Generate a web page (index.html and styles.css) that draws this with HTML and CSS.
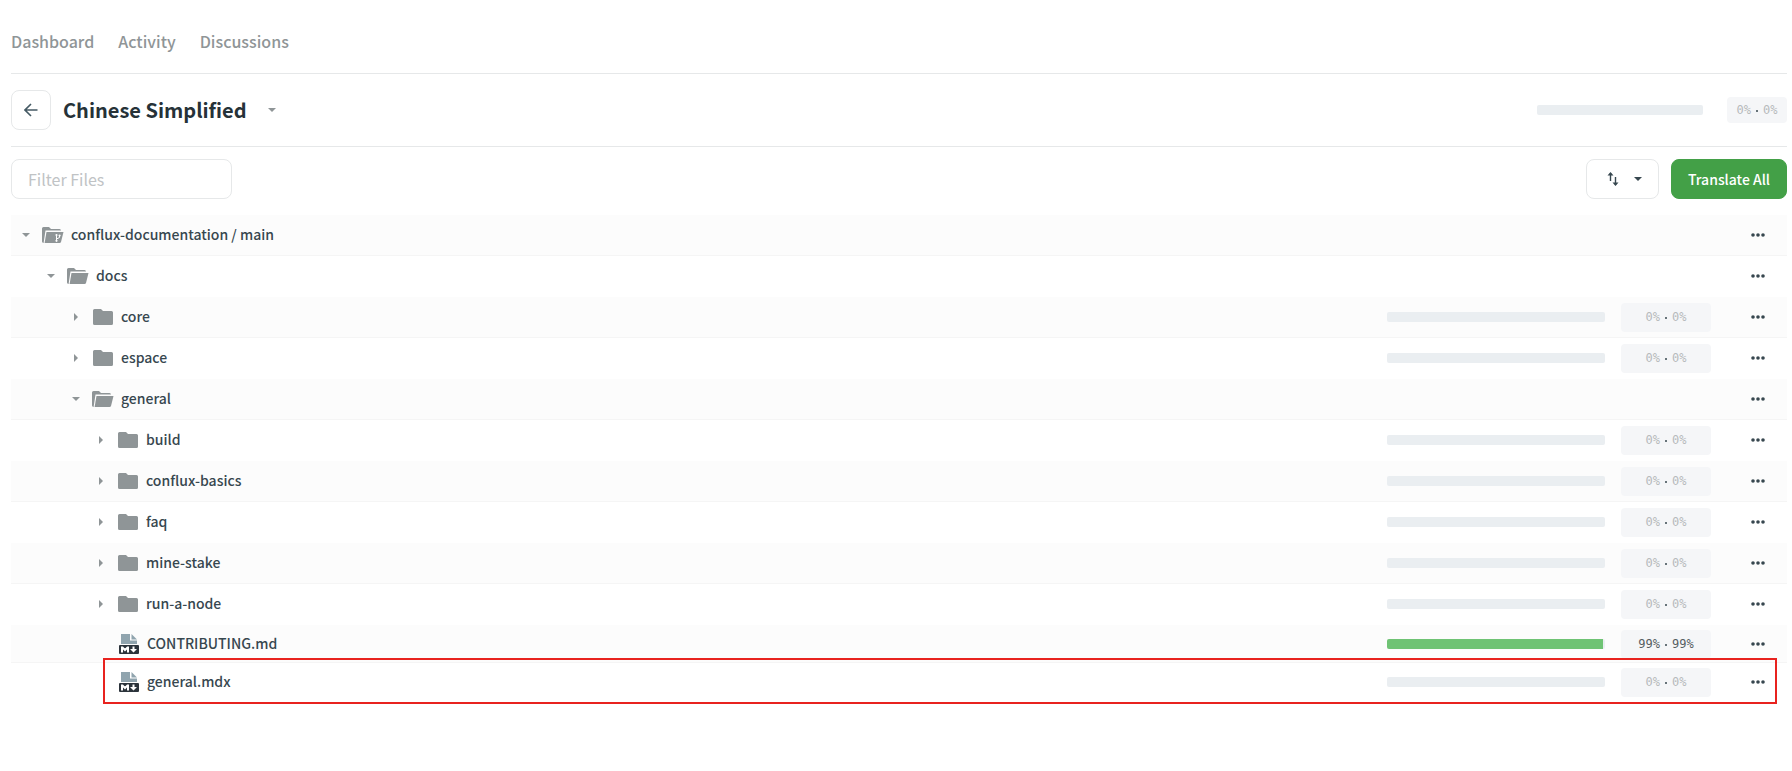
FILE: index.html
```
<!DOCTYPE html>
<html lang="en">
<head>
    <meta charset="UTF-8">
    <meta name="viewport" content="width=device-width, initial-scale=1.0">
    <title>Chinese Simplified</title>
    <link rel="stylesheet" href="styles.css">
</head>
<body>
    <!-- shared icons -->
    <svg class="sprite" aria-hidden="true">
        <symbol id="folder" viewBox="0 0 20 16"><path d="M1.500 0H8l2 2h8.500A1.500 1.500 0 0 1 20 3.500V14.500a1.500 1.500 0 0 1-1.500 1.500h-17A1.500 1.500 0 0 1 0 14.500v-13A1.500 1.500 0 0 1 1.500 0z"/></symbol>
        <symbol id="folder-open" viewBox="0 0 22 16"><path d="M1.500 0H7l2 2h8.500A1.500 1.500 0 0 1 19 3.500H3.500L1.600 15.900A1.500 1.500 0 0 1 0 14.500v-13A1.500 1.500 0 0 1 1.500 0z"/><path d="M4.500 5H21.500L19 15a1.500 1.500 0 0 1-1.400 1H2.600z"/></symbol>
        <symbol id="folder-repo" viewBox="0 0 22 16"><use href="#folder-open" width="22" height="16"/><g fill="none" stroke="#fff" stroke-width="1"><path d="M14.500 8.500v5M14.500 12l3-1.500V9"/></g><g fill="#fff"><circle cx="14.500" cy="8" r="1.100"/><circle cx="14.500" cy="13.800" r="1.100"/><circle cx="17.600" cy="8.500" r="1.100"/></g></symbol>
        <symbol id="caret" viewBox="0 0 8 4"><path d="M0 0h8L4 4z"/></symbol>
        <symbol id="dots" viewBox="0 0 14 4"><circle cx="2" cy="2" r="1.800"/><circle cx="7" cy="2" r="1.800"/><circle cx="12" cy="2" r="1.800"/></symbol>
        <symbol id="md" viewBox="0 0 20 20"><path fill="#90a4ae" d="M2 0h9v6.500h7V10H2z"/><path fill="#90a4ae" d="M12.500 0L18 5.500h-5.500z"/><rect fill="#2b333b" y="11" width="20" height="9" rx="1"/><path fill="none" stroke="#fff" stroke-width="2" d="M3 18.500v-5h.5l2.500 2.500 2.500-2.500H9v5"/><path fill="#fff" d="M13.500 12.500h2v2.500H18l-3.500 3.500L11 15h2.500z"/></symbol>
    </svg>

    <nav class="tabs">
        <a href="#">Dashboard</a>
        <a href="#">Activity</a>
        <a href="#">Discussions</a>
    </nav>

    <header class="header">
        <button class="btn back" aria-label="Back">
            <svg width="14" height="14" viewBox="0 0 14 14"><path fill="none" stroke="#455a64" stroke-width="1.600" d="M13.500 7H1.500M7 1L1 7l6 6"/></svg>
        </button>
        <h1>Chinese Simplified</h1>
        <button class="plain" aria-label="Change language"><svg class="caret"><use href="#caret"/></svg></button>
        <div class="summary">
            <div class="bar"></div>
            <span class="percent small">0%<i></i>0%</span>
        </div>
    </header>

    <div class="toolbar">
        <input class="filter" type="text" placeholder="Filter Files" aria-label="Filter Files">
        <button class="btn sort" aria-label="Sort">
            <svg width="12" height="14" viewBox="0 0 12 14"><path fill="none" stroke="#37474f" stroke-width="1.400" d="M3.500 9V1M8.500 5v8"/><path fill="#37474f" d="M0.500 3.500L3.500 0L6.500 3.500zM5.500 10.500h6L8.500 14z"/></svg>
            <svg class="caret dark"><use href="#caret"/></svg>
        </button>
        <button class="btn translate">Translate All</button>
    </div>

    <main class="files" id="files"></main>

    <script src="script.js"></script>
</body>
</html>
```
FILE: styles.css
```
* {
    box-sizing: border-box;
}

body {
    margin: 0;
    padding: 0 5px 48px 11px;
    background-color: #fff;
    color: #37474f;
    font-family: "Noto Sans CJK SC", sans-serif;
    font-size: 14px;
    font-weight: 500;
}

button,
input {
    font: inherit;
}

.sprite {
    position: absolute;
    width: 0;
    height: 0;
}

.tabs {
    display: flex;
    gap: 24px;
    padding: 29px 0 20px;
    border-bottom: 1px solid #e6e8e9;
    font-size: 16px;
    line-height: 24px;
}

.tabs a {
    color: #8f9597;
    text-decoration: none;
}

.header {
    display: flex;
    align-items: center;
    padding: 16px 0;
    border-bottom: 1px solid #e6e8e9;
}

.header h1 {
    margin: 0 17px 0 12px;
    color: #263238;
    font-size: 20px;
    font-weight: 700;
    line-height: 40px;
}

.btn {
    display: flex;
    align-items: center;
    justify-content: center;
    height: 40px;
    padding: 0;
    border: 1px solid #e6e8e9;
    border-radius: 8px;
    background-color: #fff;
    cursor: pointer;
}

.back {
    width: 40px;
}

.plain {
    display: flex;
    padding: 4px;
    border: none;
    background: none;
    cursor: pointer;
}

.caret {
    width: 8px;
    height: 4px;
    fill: #8f9597;
}

.caret.dark {
    fill: #37474f;
}

.caret.closed {
    transform: rotate(-90deg);
}

.summary {
    display: flex;
    align-items: center;
    gap: 24px;
    margin-left: auto;
}

.summary .bar {
    width: 166px;
}

.toolbar {
    display: flex;
    gap: 12px;
    padding: 12px 0 16px;
}

.filter {
    width: 221px;
    height: 40px;
    margin-right: auto;
    padding: 0 16px;
    border: 1px solid #e6e8e9;
    border-radius: 8px;
    color: #37474f;
    font-size: 16px;
    font-weight: 400;
}

.filter::placeholder {
    color: #c0c3c5;
}

.sort {
    gap: 15px;
    width: 73px;
    padding-left: 4px;
}

.translate {
    width: 116px;
    border-color: #43a047;
    background-color: #43a047;
    color: #fff;
}

.row {
    display: flex;
    align-items: center;
    height: 41px;
    border-bottom: 1px solid transparent;
}

.row:nth-child(odd) {
    border-color: #f5f5f5;
    background-color: #fcfcfc;
}

.row.file {
    height: 38px;
    padding-top: 1px;
}

.row .toggle {
    width: 16px;
    justify-content: center;
}

.row .icon {
    width: 22px;
    height: 16px;
    margin: 0 7px 0 8px;
    fill: #8f9597;
}

.row.file .icon {
    height: 20px;
    margin-left: 9px;
}

.name {
    padding-bottom: 2px;
    line-height: 20px;
}

.progress {
    display: flex;
    align-items: center;
    gap: 16px;
    margin-left: auto;
}

.bar {
    width: 218px;
    height: 10px;
    border-radius: 2px;
    background-color: #eaeef1;
    overflow: hidden;
}

.bar div {
    height: 100%;
    background-color: #6fc374;
}

.percent {
    display: flex;
    align-items: center;
    justify-content: center;
    gap: 5px;
    width: 90px;
    height: 29px;
    border-radius: 4px;
    background-color: #f5f6f8;
    color: #b7babc;
    font-family: "DejaVu Sans Mono", monospace;
    font-size: 12px;
    font-weight: 400;
}

.percent.small {
    width: 60px;
    height: 26px;
}

.percent.done {
    color: #555d61;
}

.percent i {
    width: 2px;
    height: 2px;
    margin-top: 2px;
    border-radius: 1px;
    background-color: #37474f;
}

.more {
    margin: 0 18px 0 auto;
}

.progress + .more {
    margin-left: 36px;
}

.more svg {
    width: 14px;
    height: 4px;
    fill: #37474f;
}

/* highlighted file */
.marked {
    position: relative;
}

.marked::after {
    content: "";
    position: absolute;
    top: -5px;
    right: 10px;
    bottom: -4px;
    left: 92px;
    border: 2px solid #e8231f;
    pointer-events: none;
}
```
FILE: script.js
```
const files = [
    { name: 'conflux-documentation / main', level: 0, icon: 'folder-repo', open: true },
    { name: 'docs', level: 1, icon: 'folder-open', open: true },
    { name: 'core', level: 2, icon: 'folder', percent: 0 },
    { name: 'espace', level: 2, icon: 'folder', percent: 0 },
    { name: 'general', level: 2, icon: 'folder-open', open: true },
    { name: 'build', level: 3, icon: 'folder', percent: 0 },
    { name: 'conflux-basics', level: 3, icon: 'folder', percent: 0 },
    { name: 'faq', level: 3, icon: 'folder', percent: 0 },
    { name: 'mine-stake', level: 3, icon: 'folder', percent: 0 },
    { name: 'run-a-node', level: 3, icon: 'folder', percent: 0 },
    { name: 'CONTRIBUTING.md', level: 3, icon: 'md', percent: 99 },
    { name: 'general.mdx', level: 3, icon: 'md', percent: 0, marked: true }
];

function renderRow(file) {
    const isFile = file.icon === 'md';
    const classes = 'row' + (isFile ? ' file' : '') + (file.marked ? ' marked' : '');
    const caret = isFile ? '' : `<svg class="caret${file.open ? '' : ' closed'}"><use href="#caret"/></svg>`;
    const toggle = isFile
        ? '<span class="toggle"></span>'
        : `<button class="plain toggle" aria-label="Toggle ${file.name}">${caret}</button>`;
    let progress = '';

    if (file.percent !== undefined) {
        progress = `<div class="progress">
            <div class="bar"><div style="width: ${file.percent}%"></div></div>
            <span class="percent${file.percent ? ' done' : ''}">${file.percent}%<i></i>${file.percent}%</span>
        </div>`;
    }

    return `<div class="${classes}" style="padding-left: ${7 + file.level * 25}px">
        ${toggle}
        <svg class="icon"><use href="#${file.icon}"/></svg>
        <span class="name">${file.name}</span>
        ${progress}
        <button class="plain more" aria-label="More actions"><svg><use href="#dots"/></svg></button>
    </div>`;
}

document.getElementById('files').innerHTML = files.map(renderRow).join('');
```
